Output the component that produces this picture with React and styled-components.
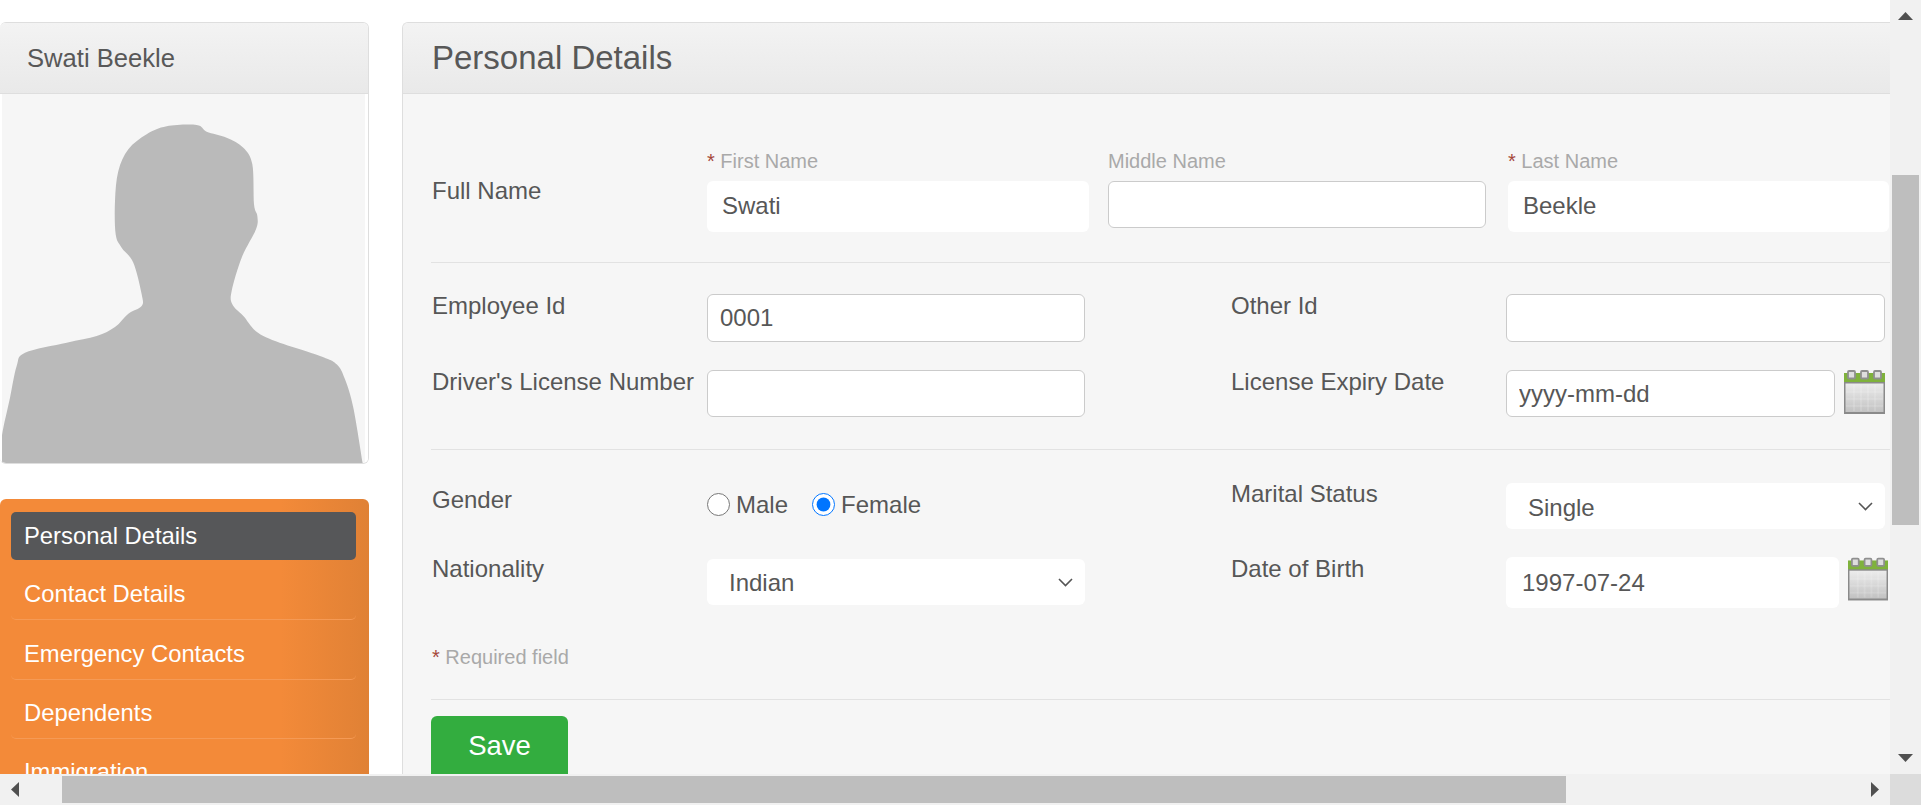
import styled, { createGlobalStyle } from "styled-components";

const GlobalStyle = createGlobalStyle`
  html, body {
    margin: 0;
    padding: 0;
    overflow: hidden;
    background: #fff;
  }
  * {
    box-sizing: border-box;
  }
`;

const Frame = styled.div`
  display: grid;
  grid-template-columns: 1890px 31px;
  grid-template-rows: 774px 31px;
  width: 1921px;
  height: 805px;
  font-family: "Liberation Sans", Arial, sans-serif;
  color: #575757;
`;
const Viewport = styled.div`
  display: flex;
  align-items: flex-start;
  padding-top: 22px;
  overflow: hidden;
`;
const Sidebar = styled.aside`
  flex: 0 0 369px;
  margin-right: 33px;
`;
const ProfileCard = styled.div`
  border: 1px solid #dedede;
  border-left: 0;
  border-radius: 6px;
  overflow: hidden;
  height: 442px;
`;
const PanelHead = styled.div`
  display: flex;
  align-items: center;
  height: 71px;
  background: linear-gradient(#f3f3f3, #e9e9e9);
  border-bottom: 1px solid #dedede;
  padding-left: ${(p) => p.$indent}px;
  font-size: ${(p) => p.$size}px;
  color: #585858;
`;
const PhotoBox = styled.div`
  background: #f6f6f6;
  border-left: 2px solid #fff;
  border-right: 3px solid #fff;
  height: 369px;
  & svg {
    display: block;
    width: 363px;
    height: 369px;
  }
`;
const Menu = styled.nav`
  margin-top: 35px;
  height: 300px;
  padding: 13px 13px 0 11px;
  border-radius: 6px 6px 0 0;
  background: linear-gradient(to right, #f38a39 76%, #e08135);
`;
const MenuItem = styled.div`
  height: ${(p) => (p.$active ? "48px" : "59.4px")};
  display: flex;
  align-items: center;
  padding: ${(p) => (p.$active ? "0" : "8px 0 0")};
  padding-left: 13px;
  font-size: 23.8px;
  color: #fff;
  border-radius: 5px;
  background: ${(p) => (p.$active ? "#565759" : "transparent")};
  border-bottom: ${(p) => (p.$active ? "0" : "1px solid #f59a55")};
  margin-bottom: ${(p) => (p.$active ? 1 : 0)}px;
`;
const Panel = styled.section`
  flex: 1;
  min-width: 0;
  height: 780px;
  background: #f6f6f6;
  border: 1px solid #dedede;
  border-right: 0;
  border-radius: 6px 0 0 0;
  overflow: hidden;
`;
const Form = styled.form`
  padding: 57px 0 0 28px;
`;
const NameRow = styled.div`
  display: flex;
  align-items: flex-start;
`;
const RowLabel = styled.div`
  flex: 0 0 ${(p) => p.$width || 276}px;
  margin-top: ${(p) => p.$top || 0}px;
  padding-left: ${(p) => (p.$width ? 0 : 1)}px;
  font-size: 24px;
  line-height: 24px;
  white-space: nowrap;
  color: #575757;
`;
const NameField = styled.div`
  flex: 0 0 ${(p) => p.$width}px;
  margin-right: ${(p) => p.$gap || 0}px;
`;
const SmallLabel = styled.div`
  height: 20px;
  margin-bottom: 10px;
  font-size: 20px;
  line-height: 20px;
  color: #a9a9a9;
`;
const Star = styled.span`
  color: #a5473a;
`;
const TextBox = styled.input`
  display: block;
  flex: none;
  width: ${(p) => (p.$width ? `${p.$width}px` : "100%")};
  height: ${(p) => p.$height}px;
  padding: 0 0 ${(p) => p.$lift || 0}px ${(p) => p.$pad || 13}px;
  font: 24px "Liberation Sans", Arial, sans-serif;
  color: #575757;
  background: #fff;
  border: ${(p) => (p.$plain ? "0" : "1px solid #cbcbcb")};
  border-radius: 6px;
  outline: none;
`;
const Rule = styled.div`
  height: 1px;
  background: #e2e2e2;
  margin-top: ${(p) => p.$top}px;
  margin-bottom: ${(p) => p.$bottom}px;
`;
const Pair = styled.div`
  display: flex;
  gap: 145px;
  margin-bottom: ${(p) => p.$gap || 0}px;
`;
const Field = styled.div`
  display: flex;
  align-items: flex-start;
  width: 654px;
  margin-left: ${(p) => p.$shift || 0}px;
`;
const Control = styled.div`
  flex: 1;
  min-width: 0;
`;
const DateWrap = styled.div`
  display: flex;
  align-items: flex-start;
  gap: 9px;
`;
const SelectWrap = styled.div`
  position: relative;
  margin-top: ${(p) => p.$top || 0}px;
  & svg {
    position: absolute;
    right: 12px;
    top: 19px;
    pointer-events: none;
  }
`;
const SelectBox = styled.select`
  display: block;
  width: 100%;
  height: 46px;
  padding: ${(p) => p.$drop}px 0 0 22px;
  appearance: none;
  font: 24px "Liberation Sans", Arial, sans-serif;
  color: #575757;
  background: #fff;
  border: 0;
  border-radius: 6px;
  outline: none;
`;
const RadioGroup = styled.div`
  display: flex;
  align-items: center;
  height: 23px;
  margin-top: 11px;
  font-size: 24px;
`;
const RadioLabel = styled.label`
  display: flex;
  align-items: center;
  gap: 6px;
  margin-right: 24px;
  & input {
    width: 23px;
    height: 23px;
    margin: 0;
  }
`;
const RequiredNote = styled.div`
  margin-top: 39px;
  padding-left: 1px;
  font-size: 20px;
  line-height: 20px;
  color: #a9a9a9;
`;
const SaveButton = styled.button`
  display: block;
  width: 137px;
  height: 60px;
  border: 0;
  border-radius: 6px 6px 0 0;
  background: #33ad3f;
  color: #fff;
  font: 27.5px "Liberation Sans", Arial, sans-serif;
`;
const VBar = styled.div`
  display: flex;
  flex-direction: column;
  align-items: center;
  background: #f1f1f1;
`;
const HBar = styled.div`
  display: flex;
  align-items: center;
  background: #f1f1f1;
`;
const Corner = styled.div`
  background: #dcdcdc;
`;
const VThumb = styled.div`
  width: 27px;
  height: 350px;
  margin-top: 155px;
  background: #bebebe;
`;
const HThumb = styled.div`
  width: 1504px;
  height: 27px;
  background: #bebebe;
`;
const Arrow = styled.svg`
  display: block;
  flex: none;
  fill: #505050;
  margin: ${(p) => p.$margin};
`;

// silhouette outline, traced in 3x page pixels
const outline = [
  [5, 1386], [5, 1310], [30, 1190], [50, 1095], [75, 1055], [200, 1025], [290, 1005],
  [345, 978], [385, 938], [425, 915], [425, 880], [400, 785], [365, 740], [347, 700],
  [345, 600], [355, 510], [385, 445], [440, 400], [500, 376], [590, 372], [620, 392],
  [680, 410], [730, 440], [757, 490], [762, 610], [772, 645], [768, 685], [725, 770],
  [695, 870], [697, 910], [730, 945], [790, 1005], [960, 1065], [1010, 1090], [1035, 1135],
  [1060, 1220], [1088, 1386],
];

// curve through every point (Catmull-Rom)
function smoothPath(points) {
  let d = `M${points[0][0]} ${points[0][1]}`;
  for (let i = 0; i < points.length - 1; i++) {
    const p0 = points[Math.max(i - 1, 0)];
    const p1 = points[i];
    const p2 = points[i + 1];
    const p3 = points[Math.min(i + 2, points.length - 1)];
    const c1 = [p1[0] + (p2[0] - p0[0]) / 6, p1[1] + (p2[1] - p0[1]) / 6];
    const c2 = [p2[0] - (p3[0] - p1[0]) / 6, p2[1] - (p3[1] - p1[1]) / 6];
    d += ` C${c1[0]} ${c1[1]} ${c2[0]} ${c2[1]} ${p2[0]} ${p2[1]}`;
  }
  return `${d} Z`;
}

function Silhouette() {
  return (
    <svg viewBox="6 279 1089 1107" preserveAspectRatio="none">
      <path d={smoothPath(outline)} fill="#bababa" />
    </svg>
  );
}

function Chevron() {
  return (
    <svg width="15" height="9" viewBox="0 0 15 9">
      <path d="M1 1L7.5 7.5L14 1" fill="none" stroke="#555" strokeWidth="1.6" />
    </svg>
  );
}

function CalendarIcon({ id, width }) {
  return (
    <svg width={width} height="44" viewBox="0 0 41 44" style={{ flex: "none" }}>
      <defs>
        <linearGradient id={id} x1="0" y1="0" x2="0" y2="1">
          <stop offset="0" stopColor="#ececec" />
          <stop offset="1" stopColor="#c2c2c2" />
        </linearGradient>
      </defs>
      <rect x="0" y="3" width="41" height="10" fill="#7fb23c" />
      <rect x="0" y="12" width="41" height="32" fill="#8a8a8a" />
      <rect x="1.5" y="13.5" width="38" height="28.5" fill={`url(#${id})`} />
      {[9, 16, 23, 30].map((x) => (
        <rect key={x} x={x} y="15" width="2" height="26" fill="#fff" opacity="0.14" />
      ))}
      {[21, 28, 35].map((y) => (
        <rect key={y} x="2" y={y} width="37" height="2" fill="#fff" opacity="0.12" />
      ))}
      {[4, 17, 30].map((x) => (
        <rect key={x} x={x} y="1" width="7" height="7.5" rx="1" fill="#dedede" stroke="#8f8f8f" strokeWidth="1.8" />
      ))}
    </svg>
  );
}

const menuItems = ["Contact Details", "Emergency Contacts", "Dependents", "Immigration"];

function App() {
  return (
    <>
      <GlobalStyle />
      <Frame>
        <Viewport>
          <Sidebar>
            <ProfileCard>
              <PanelHead $indent={27} $size={25.6}>Swati Beekle</PanelHead>
              <PhotoBox>
                <Silhouette />
              </PhotoBox>
            </ProfileCard>
            <Menu>
              <MenuItem $active>Personal Details</MenuItem>
              {menuItems.map((item) => (
                <MenuItem key={item}>{item}</MenuItem>
              ))}
            </Menu>
          </Sidebar>

          <Panel>
            <PanelHead $indent={29} $size={33}>Personal Details</PanelHead>
            <Form>
              <NameRow>
                <RowLabel $top={28}>Full Name</RowLabel>
                <NameField $width={382} $gap={19}>
                  <SmallLabel><Star>*</Star> First Name</SmallLabel>
                  <TextBox $plain $height={51} $pad={15} $lift={2} defaultValue="Swati" />
                </NameField>
                <NameField $width={378} $gap={22}>
                  <SmallLabel>Middle Name</SmallLabel>
                  <TextBox $height={47} />
                </NameField>
                <NameField $width={381}>
                  <SmallLabel><Star>*</Star> Last Name</SmallLabel>
                  <TextBox $plain $height={51} $pad={15} $lift={2} defaultValue="Beekle" />
                </NameField>
              </NameRow>
              <Rule $top={30} $bottom={31} />

              <Pair $gap={28}>
                <Field>
                  <RowLabel>Employee Id</RowLabel>
                  <Control><TextBox $height={48} $pad={12} defaultValue="0001" /></Control>
                </Field>
                <Field $shift={1}>
                  <RowLabel $width={275}>Other Id</RowLabel>
                  <Control><TextBox $height={48} /></Control>
                </Field>
              </Pair>
              <Pair>
                <Field>
                  <RowLabel>Driver's License Number</RowLabel>
                  <Control><TextBox $height={47} /></Control>
                </Field>
                <Field $shift={1}>
                  <RowLabel $width={275}>License Expiry Date</RowLabel>
                  <Control>
                    <DateWrap>
                      <TextBox $width={329} $height={47} $pad={12} defaultValue="yyyy-mm-dd" />
                      <CalendarIcon id="calA" width={41} />
                    </DateWrap>
                  </Control>
                </Field>
              </Pair>
              <Rule $top={32} $bottom={32} />

              <Pair $gap={28}>
                <Field>
                  <RowLabel $top={6}>Gender</RowLabel>
                  <RadioGroup>
                    <RadioLabel><input type="radio" name="gender" />Male</RadioLabel>
                    <RadioLabel><input type="radio" name="gender" defaultChecked />Female</RadioLabel>
                  </RadioGroup>
                </Field>
                <Field $shift={1}>
                  <RowLabel $width={275}>Marital Status</RowLabel>
                  <Control>
                    <SelectWrap $top={1}>
                      <SelectBox $drop={2} defaultValue="Single">
                        <option>Single</option>
                        <option>Married</option>
                      </SelectBox>
                      <Chevron />
                    </SelectWrap>
                  </Control>
                </Field>
              </Pair>
              <Pair>
                <Field>
                  <RowLabel>Nationality</RowLabel>
                  <Control>
                    <SelectWrap $top={2}>
                      <SelectBox $drop={0} defaultValue="Indian">
                        <option>Indian</option>
                      </SelectBox>
                      <Chevron />
                    </SelectWrap>
                  </Control>
                </Field>
                <Field $shift={1}>
                  <RowLabel $width={275}>Date of Birth</RowLabel>
                  <Control>
                    <DateWrap>
                      <TextBox $plain $width={333} $height={51} $pad={16} defaultValue="1997-07-24" />
                      <CalendarIcon id="calB" width={40} />
                    </DateWrap>
                  </Control>
                </Field>
              </Pair>

              <RequiredNote><Star>*</Star> Required field</RequiredNote>
              <Rule $top={32} $bottom={16} />
              <SaveButton type="button">Save</SaveButton>
            </Form>
          </Panel>
        </Viewport>

        <VBar>
          <Arrow $margin="12px 0 0" width="15" height="8" viewBox="0 0 15 8"><path d="M7.5 0L15 8H0Z" /></Arrow>
          <VThumb />
          <Arrow $margin="auto 0 12px" width="15" height="8" viewBox="0 0 15 8"><path d="M0 0H15L7.5 8Z" /></Arrow>
        </VBar>
        <HBar>
          <Arrow $margin="0 43px 0 11px" width="8" height="15" viewBox="0 0 8 15"><path d="M8 0V15L0 7.5Z" /></Arrow>
          <HThumb />
          <Arrow $margin="0 11px 0 auto" width="8" height="15" viewBox="0 0 8 15"><path d="M0 0L8 7.5L0 15Z" /></Arrow>
        </HBar>
        <Corner />
      </Frame>
    </>
  );
}

export default App;
